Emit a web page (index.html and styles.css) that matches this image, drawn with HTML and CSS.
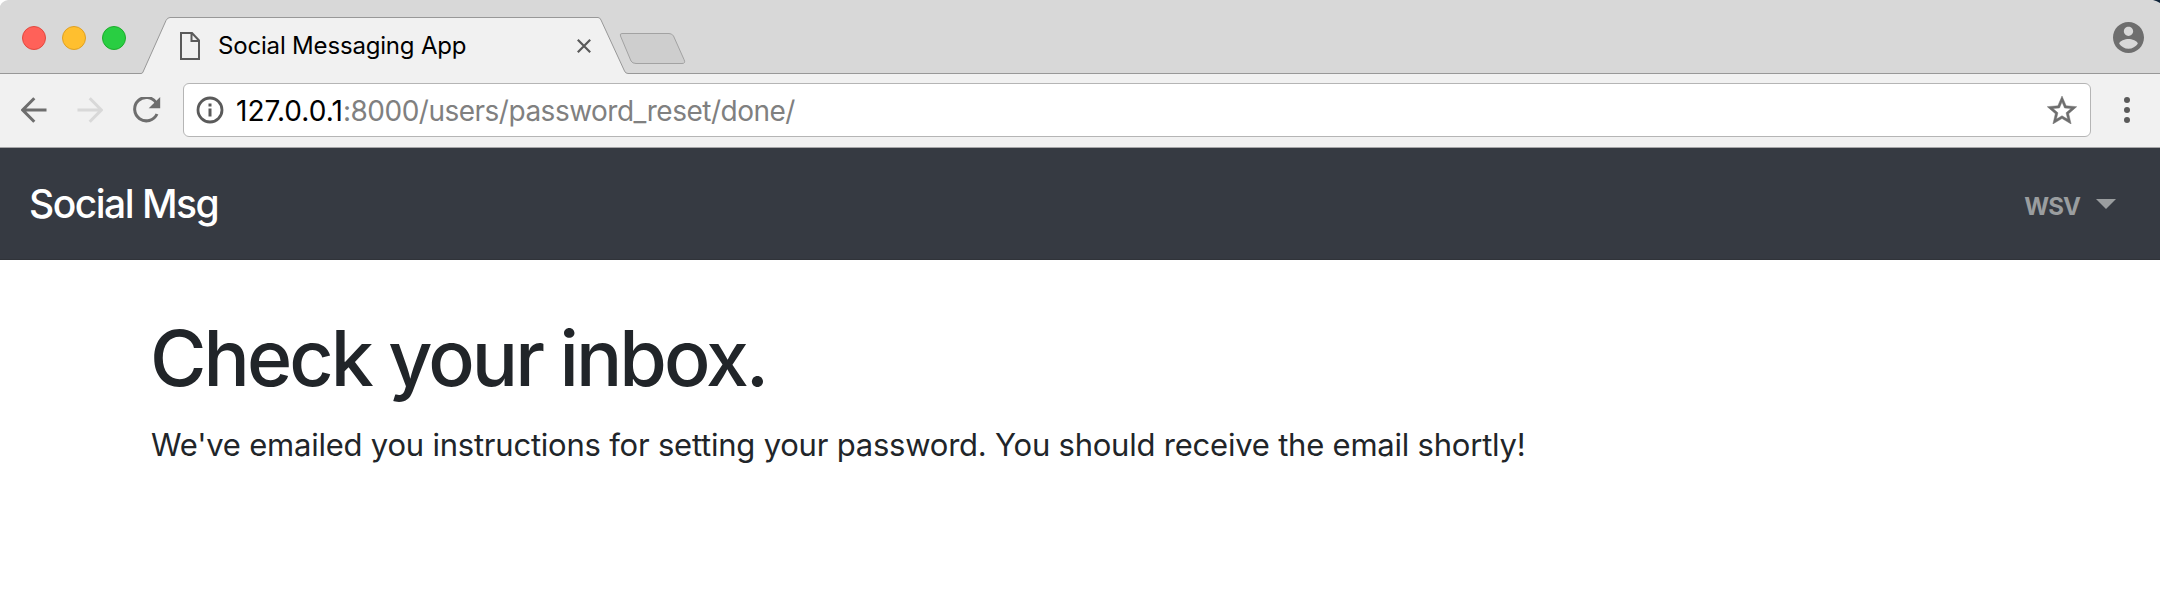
FILE: index.html
```html
<!DOCTYPE html>
<html lang="en">
<head>
<meta charset="utf-8">
<title>Social Messaging App</title>
<link rel="stylesheet" href="styles.css">
</head>
<body>
<div class="tab-strip">
  <svg class="tab-outline" width="2160" height="74" viewBox="0 0 2160 74">
    <path d="M0 0H8Q2 1 0 6Z" fill="#fff"/>
    <path d="M2153 0H2160V3Q2157 1 2153 0Z" fill="#10253a"/>
    <path class="tab-shape" d="M-2 73.5H141Q142.500 73.500 143 72L166 20.500Q167.500 17.500 170 17.500H598Q600 17.500 601 20L624.500 71Q625.500 73.500 628 73.500H2162V80H-2Z"/>
    <path class="new-tab" d="M622 33.500H669Q672 33.500 673.500 36L684 59.500Q686 63.500 682 63.500H636Q632.500 63.500 631 61L620.500 36Q619.500 33.500 622 33.500Z"/>
  </svg>
  <div class="lights">
    <span class="light red"></span><span class="light yellow"></span><span class="light green"></span>
  </div>
  <div class="tab">
    <svg class="file" width="20" height="28" viewBox="0 0 20 28"><path d="M1 1H12L19 8.500V27H1ZM11.500 1V9H19" fill="none" stroke="#5a5a5a" stroke-width="2"/></svg>
    <span class="tab-title">Social Messaging App</span>
    <svg class="close" width="14" height="14" viewBox="0 0 14 14"><path d="M.8.8 13.200 13.200M13.200.8.8 13.200" stroke="#5a5a5a" stroke-width="2.200"/></svg>
  </div>
  <svg class="profile" width="31" height="31" viewBox="2 2 20 20"><path fill="#6e6e6e" d="M12 2C6.480 2 2 6.480 2 12s4.480 10 10 10 10-4.480 10-10S17.520 2 12 2zm0 3c1.660 0 3 1.340 3 3s-1.340 3-3 3-3-1.340-3-3 1.340-3 3-3zm0 14.200c-2.500 0-4.710-1.280-6-3.220.03-1.990 4-3.080 6-3.080 1.990 0 5.970 1.090 6 3.080-1.290 1.940-3.500 3.220-6 3.220z"/></svg>
</div>
<div class="toolbar">
  <svg class="back" width="26" height="26" viewBox="0 0 26 26"><path d="M25.500 13H2M13.300 1.200 1.700 13 13.300 24.800" fill="none" stroke="#6e6e6e" stroke-width="3"/></svg>
  <svg class="forward" width="26" height="26" viewBox="0 0 26 26"><path d="M.5 13H24M12.700 1.200 24.300 13 12.700 24.800" fill="none" stroke="#d8d8d8" stroke-width="3"/></svg>
  <svg class="reload" width="28" height="26" viewBox="0 0 28 26"><path d="M23.200 5.800A11.700 11.700 0 1 0 24 17" fill="none" stroke="#6e6e6e" stroke-width="3"/><path d="M27.200 0V11.300H15.700Z" fill="#6e6e6e"/></svg>
  <div class="address">
    <svg class="info" width="28" height="28" viewBox="0 0 28 28"><circle cx="14" cy="14" r="12" fill="none" stroke="#5a5a5a" stroke-width="2.800"/><path d="M12.500 7.500h3v3h-3zM12.500 12.500h3v8h-3z" fill="#5a5a5a"/></svg>
    <span class="url"><span class="host">127.0.0.1</span>:8000/users/password_reset/done/</span>
    <svg class="star" width="30" height="28" viewBox="2 2 20 19"><path fill="#6e6e6e" stroke="#6e6e6e" stroke-width=".3" d="M22 9.240l-7.190-.62L12 2 9.190 8.630 2 9.240l5.460 4.730L5.820 21 12 17.270 18.180 21l-1.630-7.030L22 9.240zM12 15.400l-3.760 2.270 1-4.280-3.320-2.880 4.380-.38L12 6.100l1.710 4.040 4.380.38-3.320 2.880 1 4.280L12 15.400z"/></svg>
  </div>
  <svg class="more" width="6" height="26" viewBox="0 0 6 26" fill="#5a5a5a"><circle cx="3" cy="3" r="3"/><circle cx="3" cy="13" r="3"/><circle cx="3" cy="23" r="3"/></svg>
</div>
<nav class="navbar">
  <span class="brand">Social Msg</span>
  <span class="user"><span class="user-name">WSV</span><span class="caret"></span></span>
</nav>
<main class="content">
  <h1 class="heading">Check your inbox.</h1>
  <p class="message">We've emailed you instructions for setting your password. You should receive the email shortly!</p>
</main>
</body>
</html>
```
FILE: styles.css
```css
* { box-sizing: border-box; }
body { margin: 0; background: #fff; color: #212529; font-family: Inter, "Liberation Sans", sans-serif; white-space: nowrap; }
svg { display: block; flex: none; }
.tab-strip { position: relative; display: flex; height: 74px; background: #d8d8d8; }
.tab-outline { position: absolute; left: 0; top: 0; }
.tab-shape { fill: #f1f1f1; stroke: #989898; }
.new-tab { fill: #cecece; stroke: #a2a2a2; }
.lights, .tab, .profile { position: relative; }
.lights { display: flex; gap: 16px; padding: 26px 0 0 22px; width: 180px; }
.light { width: 24px; height: 24px; border-radius: 50%; border: 1px solid; }
.red { background: #ff6159; border-color: #e2493f; }
.yellow { background: #ffbf2f; border-color: #dfa023; }
.green { background: #29ce42; border-color: #1dad2b; }
.tab { display: flex; width: 411px; height: 56px; margin-top: 18px; align-items: center; }
.tab-title { margin-left: 18px; color: #000; font-size: 24px; line-height: 28px; letter-spacing: -0.18px; }
.close { margin-left: auto; }
.profile { margin: 22px 16px 0 auto; }
.toolbar { display: flex; align-items: center; height: 74px; padding: 0 30px 1px 21px; background: #f1f1f1; border-bottom: 1px solid #a6a6a8; }
.forward { margin-left: 30px; }
.reload { margin-left: 30px; }
.address { display: flex; align-items: center; width: 1908px; height: 54px; margin-left: 22px; padding: 0 13px 0 12px; background: #fff; border: 1px solid #b5b5b5; border-radius: 6px; }
.url { margin-left: 12px; padding-top: 2px; color: #808080; font-size: 28px; line-height: 34px; letter-spacing: -0.5px; }
.host { color: #000; letter-spacing: 0.05px; }
.star { margin-left: auto; }
.more { margin-left: auto; }
.navbar { display: flex; align-items: center; justify-content: space-between; height: 112px; padding: 0 44px 0 29px; background: #363a42; border-bottom: 1px solid #303339; }
.brand { color: #fff; font-size: 39px; font-weight: 500; line-height: 50px; letter-spacing: -1.5px; }
.user { display: flex; align-items: center; color: #9a9d9f; }
.user-name { font-size: 24px; font-weight: 700; line-height: 30px; padding-top: 7px; letter-spacing: -0.9px; }
.caret { margin-left: 16px; border: solid transparent; border-width: 10px 10px 0; border-top-color: #9a9d9f; }
.content { padding: 50px 151px 0; }
.heading { margin: 0 0 0 -1px; font-size: 77px; font-weight: 500; line-height: 96px; letter-spacing: -2.95px; }
.message { margin: 15px 0 0; font-size: 31px; line-height: 48px; letter-spacing: -0.22px; }
```
